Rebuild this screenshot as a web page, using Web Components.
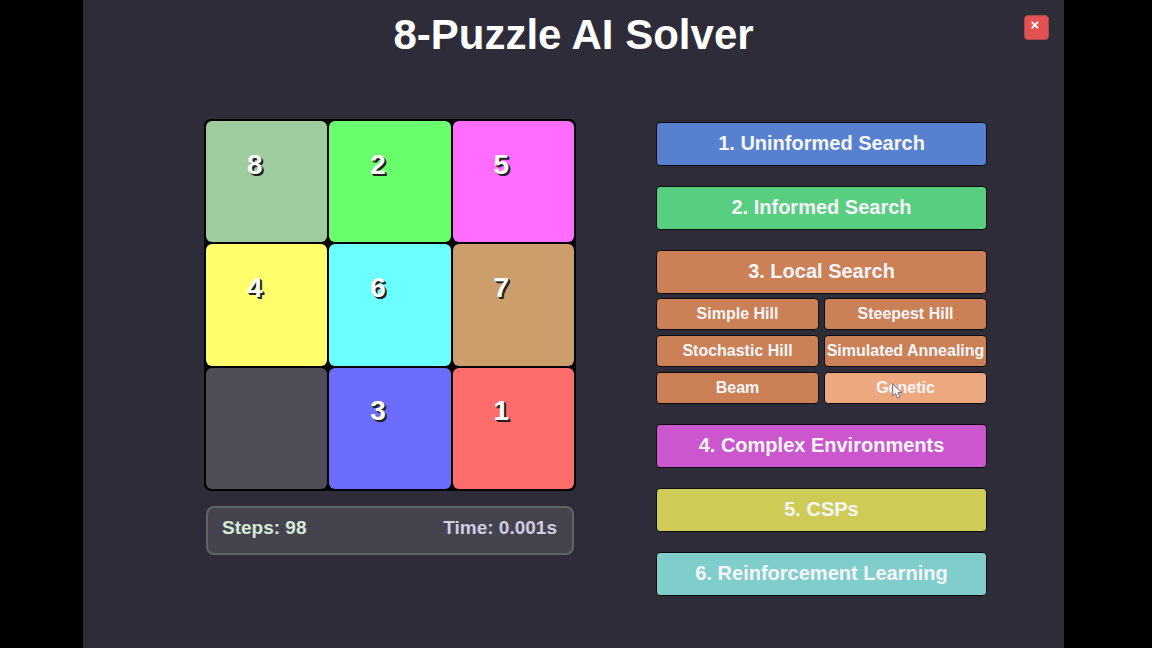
<!DOCTYPE html>
<html lang="en">
<head>
<meta charset="utf-8">
<meta name="viewport" content="width=device-width, initial-scale=1">
<title>8-Puzzle AI Solver</title>
<style>
html, body { margin: 0; background: #000; font-family: "Liberation Sans", Arial, sans-serif; font-weight: 700; color: #fff; }
</style>
</head>
<body>
<puzzle-app></puzzle-app>
<script>
class PuzzleElement extends HTMLElement {
  render(html) {
    if (!this.shadowRoot) this.attachShadow({ mode: 'open' });
    this.shadowRoot.innerHTML = html;
  }
}

customElements.define('close-button', class extends PuzzleElement {
  connectedCallback() {
    this.render(`<style>
      :host { display: block; }
      button { display: block; box-sizing: border-box; width: 25px; height: 25px; padding: 0 3px 5px 0; border: 1px solid #a84a42; border-radius: 4px;
        background: #e25252; color: #fff; font: inherit; font-size: 15px; line-height: 18px; text-align: center; }
    </style><button type="button" aria-label="Close">×</button>`);
  }
});

customElements.define('app-header', class extends PuzzleElement {
  connectedCallback() {
    this.render(`<style>
      :host { display: grid; grid-template-columns: 1fr auto 1fr; align-items: start; padding: 11px 15px 0; }
      h1 { grid-column: 2; margin: 0; font-size: 42px; line-height: 48px; }
      close-button { justify-self: end; margin-top: 4px; }
    </style><h1><slot></slot></h1><close-button></close-button>`);
  }
});

customElements.define('puzzle-tile', class extends PuzzleElement {
  connectedCallback() {
    this.render(`<style>
      :host { display: flex; align-items: center; justify-content: center; box-sizing: border-box; aspect-ratio: 1; padding: 0 24px 34px 0;
        border-radius: 6px; background: var(--tile); font-size: 28px; line-height: 32px; text-shadow: 1px 1px #222, 2px 2px #222; }
    </style><slot></slot>`);
  }
});

customElements.define('puzzle-board', class extends PuzzleElement {
  connectedCallback() {
    const tiles = [['8', '#9ecc9e'], ['2', '#6aff6c'], ['5', '#ff6cff'], ['4', '#ffff6c'], ['6', '#6cffff'], ['7', '#cc9e6c'], ['', '#4f4d57'], ['3', '#6c6cff'], ['1', '#ff6c6c']];
    this.render(`<style>
      :host { display: grid; grid-template-columns: repeat(3, 1fr); gap: 2px; padding: 2px; border-radius: 7px; background: #000; }
    </style>${tiles.map(([n, c]) => `<puzzle-tile style="--tile:${c}">${n}</puzzle-tile>`).join('')}`);
  }
});

customElements.define('run-stats', class extends PuzzleElement {
  connectedCallback() {
    this.render(`<style>
      :host { display: flex; justify-content: space-between; box-sizing: border-box; min-height: 49px; margin: 15px 2px 0; padding: 8px 15px 0 14px;
        border: 2px solid #5f666a; border-radius: 8px; background: #45434d; font-size: 19px; line-height: 24px; }
      .steps { color: #d6ead8; }
      .time { color: #d0cce4; }
    </style><span class="steps">Steps: 98</span><span class="time">Time: 0.001s</span>`);
  }
});

customElements.define('search-button', class extends PuzzleElement {
  connectedCallback() {
    this.render(`<style>
      :host { display: block; position: relative; font-size: 20px; line-height: 24px; --height: 44px; --drop: 2px; }
      :host([small]) { font-size: 16px; line-height: 20px; --height: 32px; --drop: 0; }
      button { display: flex; align-items: center; justify-content: center; box-sizing: border-box; width: 100%; height: var(--height); padding: 0 0 var(--drop);
        border: 1px solid #0c0b10; border-radius: 4px; background: var(--fill); color: #f6f6fa; font: inherit; white-space: nowrap; }
    </style><button type="button"><slot></slot></button><slot name="pointer"></slot>`);
  }
});

customElements.define('mouse-pointer', class extends PuzzleElement {
  connectedCallback() {
    this.render(`<style>
      :host { display: block; position: absolute; left: 42%; top: 11px; pointer-events: none; }
      svg { display: block; }
    </style><svg width="12" height="17" viewBox="0 0 12 17" aria-hidden="true"><path d="M.7 .8V13L3.5 10.4 5.5 15.2 8 14.1 6 9.6H10Z" fill="#f4f4f6" stroke="#7d6d72" stroke-width="1"/></svg>`);
  }
});

customElements.define('search-menu', class extends PuzzleElement {
  connectedCallback() {
    this.render(`<style>
      :host { display: flex; flex-direction: column; gap: 20px; }
      .group { display: flex; flex-direction: column; gap: 4px; }
      .options { display: grid; grid-template-columns: repeat(2, minmax(0, 1fr)); gap: 5px; }
    </style>
    <search-button style="--fill:#5780ce">1. Uninformed Search</search-button>
    <search-button style="--fill:#58ce80">2. Informed Search</search-button>
    <div class="group" style="--fill:#cb8056">
      <search-button>3. Local Search</search-button>
      <div class="options">
        <search-button small>Simple Hill</search-button>
        <search-button small>Steepest Hill</search-button>
        <search-button small>Stochastic Hill</search-button>
        <search-button small>Simulated Annealing</search-button>
        <search-button small>Beam</search-button>
        <search-button small style="--fill:#eea880">Genetic<mouse-pointer slot="pointer"></mouse-pointer></search-button>
      </div>
    </div>
    <search-button style="--fill:#cc56ce">4. Complex Environments</search-button>
    <search-button style="--fill:#cecc56">5. CSPs</search-button>
    <search-button style="--fill:#80cecb">6. Reinforcement Learning</search-button>`);
  }
});

customElements.define('puzzle-app', class extends PuzzleElement {
  connectedCallback() {
    this.render(`<style>
      :host { display: block; box-sizing: border-box; min-height: 100vh; margin: 0 88px 0 83px; background: #2e2c38; }
      main { display: grid; grid-template-columns: minmax(0, 372fr) minmax(0, 331fr); column-gap: 80px; align-items: start; padding: 60px 77px 32px 121px; }
      search-menu { margin-top: 3px; }
    </style>
    <app-header>8-Puzzle AI Solver</app-header>
    <main>
      <section><puzzle-board></puzzle-board><run-stats></run-stats></section>
      <search-menu></search-menu>
    </main>`);
  }
});
</script>
</body>
</html>
